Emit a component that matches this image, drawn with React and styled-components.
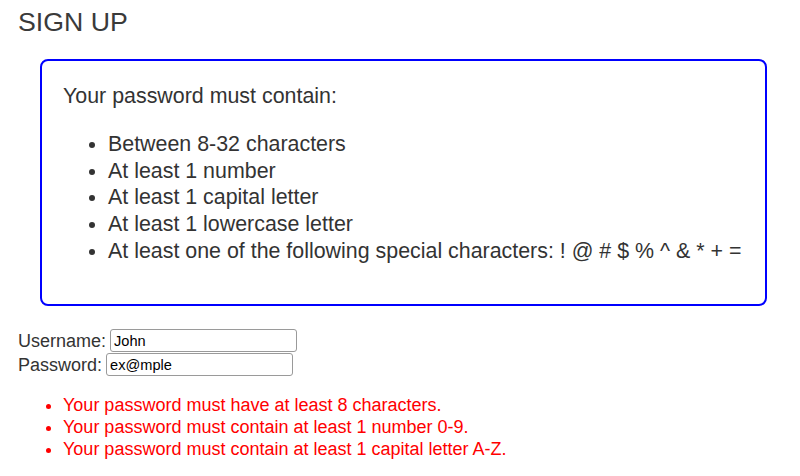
import React from "react";
import styled, { createGlobalStyle } from "styled-components";

const Global = createGlobalStyle`
  html, body { margin: 0; padding: 0; background: #fff; }
  body { font-family: "Liberation Sans", Arial, sans-serif; color: #333; }
`;

const Page = styled.div`
  padding: 0 18px;
`;

const Title = styled.h1`
  margin: 7px 0 0;
  font-size: 26.7px;
  line-height: 30px;
  font-weight: normal;
  color: #3a3a3a;
`;

const RulesBox = styled.section`
  margin: 22px 15px 0 22px;
  border: 2px solid #0000ff;
  border-radius: 8px;
  padding: 22px 21px 39px;
`;

const RulesHeading = styled.p`
  margin: 0 0 21px;
  font-size: 21.4px;
  line-height: 26.75px;
`;

const List = styled.ul`
  margin: 0;
  padding-left: 45px;
  font-size: ${(p) => p.$size};
  line-height: ${(p) => p.$lh};
  color: ${(p) => p.$color};
`;

const Form = styled.form`
  margin-top: 23px;
  display: flex;
  flex-direction: column;
`;

const Row = styled.div`
  display: flex;
  align-items: center;
  gap: 4px;
  height: 24px;
`;

const Label = styled.label`
  font-size: 18px;
  line-height: 21px;
  padding-top: 1px;
`;

const Input = styled.input`
  box-sizing: border-box;
  width: 187px;
  height: 23px;
  margin: 0;
  padding: 0 3px;
  border: 1px solid #9a9a9a;
  border-radius: 3px;
  font-family: "Liberation Sans", Arial, sans-serif;
  font-size: 14.6px;
  color: #000;
  background: #fff;
`;

const Errors = styled.div`
  margin-top: 18.6px;
`;

const rules = [
  "Between 8-32 characters",
  "At least 1 number",
  "At least 1 capital letter",
  "At least 1 lowercase letter",
  "At least one of the following special characters: ! @ # $ % ^ & * + =",
];

const errors = [
  "Your password must have at least 8 characters.",
  "Your password must contain at least 1 number 0-9.",
  "Your password must contain at least 1 capital letter A-Z.",
];

export default function App() {
  return (
    <>
      <Global />
      <Page>
        <Title>SIGN UP</Title>
        <RulesBox>
          <RulesHeading>Your password must contain:</RulesHeading>
          <List $size="21.4px" $lh="26.75px" $color="#333">
            {rules.map((r) => (
              <li key={r}>{r}</li>
            ))}
          </List>
        </RulesBox>
        <Form onSubmit={(e) => e.preventDefault()}>
          <Row>
            <Label htmlFor="username">Username:</Label>
            <Input id="username" type="text" defaultValue="John" />
          </Row>
          <Row>
            <Label htmlFor="password">Password:</Label>
            <Input id="password" type="text" defaultValue="ex@mple" />
          </Row>
        </Form>
        <Errors>
          <List $size="18px" $lh="21.7px" $color="#ff0000">
            {errors.map((r) => (
              <li key={r}>{r}</li>
            ))}
          </List>
        </Errors>
      </Page>
    </>
  );
}
